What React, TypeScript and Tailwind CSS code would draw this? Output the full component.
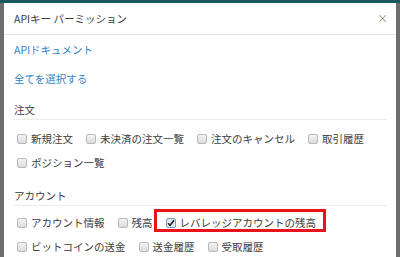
import type { ReactNode } from "react";

type Perm = {
  label: string;
  checked?: boolean;
  marked?: boolean;
};

const orderPerms: Perm[] = [
  { label: "新規注文" },
  { label: "未決済の注文一覧" },
  { label: "注文のキャンセル" },
  { label: "取引履歴" },
  { label: "ポジション一覧" },
];

const accountPerms: Perm[] = [
  { label: "アカウント情報" },
  { label: "残高" },
  { label: "レバレッジアカウントの残高", checked: true, marked: true },
  { label: "ビットコインの送金" },
  { label: "送金履歴" },
  { label: "受取履歴" },
];

function Checkbox({ checked }: { checked?: boolean }) {
  if (checked) {
    return (
      <span className="mr-[4px] flex h-[10px] w-[10px] shrink-0 items-center justify-center rounded-[2px] border border-[#7a9cc4] bg-[#dfe9f5]">
        <svg width="8" height="8" viewBox="0 0 8 8">
          <path d="M1 4.2 L3.1 6.3 L7 1.2" fill="none" stroke="#222" strokeWidth="1.6" />
        </svg>
      </span>
    );
  }
  return (
    <span className="mr-[4px] h-[10px] w-[10px] shrink-0 rounded-[2px] border border-[#b9b9b9] bg-gradient-to-b from-[#f4f4f4] to-[#dcdcdc]" />
  );
}

function PermItem({ perm }: { perm: Perm }) {
  return (
    <label className="relative flex h-[24px] items-center">
      <Checkbox checked={perm.checked} />
      <span>{perm.label}</span>
      {perm.marked && (
        <span className="pointer-events-none absolute -left-[12px] -right-[10px] -top-[2px] bottom-[3px] border-[3px] border-[#e8141c]" />
      )}
    </label>
  );
}

function Section({ title, children }: { title: string; children: ReactNode }) {
  return (
    <div>
      <div className="mt-[8px] flex h-[19px] items-center border-b border-[#ececec]">{title}</div>
      {children}
    </div>
  );
}

export default function App() {
  return (
    <div
      className="relative h-[257px] w-[400px] overflow-hidden bg-[#6d6d6d] text-[10.5px] text-[#3d3d3d]"
      style={{ fontFamily: '"Noto Sans CJK JP", "Noto Sans", sans-serif' }}
    >
      <div className="h-[3px] bg-[#17595d]" />
      <div className="ml-[4px] h-[260px] w-[392px] bg-white">
        <div className="flex h-[32px] items-center justify-between border-b border-[#e3e3e3] pl-[10px] pr-[8px]">
          <span>APIキー パーミッション</span>
          <span className="text-[11px] leading-none text-[#888]">×</span>
        </div>
        <div className="px-[10px]">
          <div className="flex h-[29px] items-center text-[#2f86c8]">APIドキュメント</div>
          <div className="flex h-[29px] items-center text-[#2f86c8]">全てを選択する</div>
          <Section title="注文">
            <div className="flex flex-wrap gap-x-[13px] pl-[3px] pt-[7px]">
              {orderPerms.map((p) => (
                <PermItem key={p.label} perm={p} />
              ))}
            </div>
          </Section>
          <div className="pt-[4px]">
            <Section title="アカウント">
              <div className="flex flex-wrap gap-x-[13px] pl-[3px] pt-[5px]">
                {accountPerms.map((p) => (
                  <PermItem key={p.label} perm={p} />
                ))}
              </div>
            </Section>
          </div>
        </div>
      </div>
    </div>
  );
}
